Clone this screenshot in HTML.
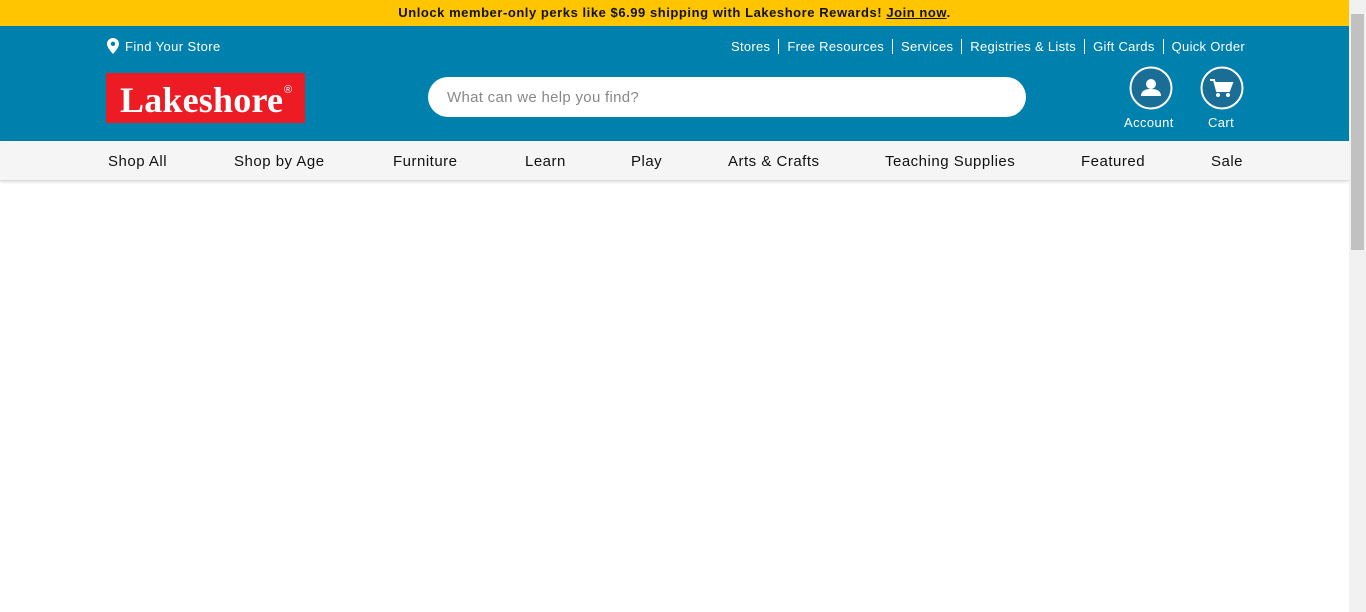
<!DOCTYPE html>
<html><head><style>
*{margin:0;padding:0;box-sizing:border-box}
body{width:1366px;height:612px;overflow:hidden;font-family:"Liberation Sans",sans-serif;background:#fff;position:relative}
.promo{position:absolute;left:0;top:0;width:1349px;height:26px;background:#ffc600;text-align:center;font-size:13px;font-weight:bold;line-height:26px;color:#111;letter-spacing:0.55px}
.hdr{position:absolute;left:0;top:26px;width:1349px;height:115px;background:#0080ad;color:#fff}
.t{position:absolute;font-size:13px;color:#fff;white-space:nowrap;letter-spacing:0.4px}
.links{position:absolute;right:104px;top:13px;font-size:13px;letter-spacing:0.3px;color:#fff}
.links span{padding:0 8px;border-left:1px solid #fff}
.links span:first-child{border:none}
.links span:last-child{padding-right:0}
.logo{position:absolute;left:106px;top:47px;width:199px;height:50px;background:#ed1c24}
.logo b{position:absolute;left:14px;top:8px;font-family:"Liberation Serif",serif;font-weight:bold;color:#fff;font-size:36px;line-height:38px;letter-spacing:0.2px}
.logo i{position:absolute;left:178px;top:11px;font-style:normal;color:#fff;font-size:11px;font-family:"Liberation Sans",sans-serif}
.search{position:absolute;left:428px;top:51px;width:598px;height:40px;background:#fff;border-radius:20px;font-size:15px;color:#888;line-height:42px;padding-left:19px;letter-spacing:0.3px}
.nav{position:absolute;left:0;top:141px;width:1349px;height:40px;background:#f5f5f5;border-bottom:1px solid #ddd;box-shadow:0 1px 3px rgba(0,0,0,.15)}
.nav span{position:absolute;top:12px;font-size:15px;color:#111;letter-spacing:0.5px}
.sb{position:absolute;left:1349px;top:0;width:17px;height:612px;background:#f1f1f1}
.thumb{position:absolute;left:1351px;top:14px;width:13px;height:236px;background:#c1c1c1}
</style></head><body>
<div class="promo">Unlock member-only perks like $6.99 shipping with Lakeshore Rewards! <u>Join now</u>.</div>
<div class="hdr">
<svg style="position:absolute;left:107px;top:12px" width="12" height="16" viewBox="0 0 12 16"><path d="M6 0C2.7 0 0 2.6 0 5.8 0 10 6 16 6 16s6-6 6-10.2C12 2.6 9.3 0 6 0z" fill="#fff"/><circle cx="6" cy="5.8" r="2.2" fill="#0080ad"/></svg>
<div class="t" style="left:125px;top:13px">Find Your Store</div>
<div class="links"><span>Stores</span><span>Free Resources</span><span>Services</span><span>Registries &amp; Lists</span><span>Gift Cards</span><span>Quick Order</span></div>
<div class="logo"><b>Lakeshore</b><i>®</i></div>
<div class="search">What can we help you find?</div>
<svg style="position:absolute;left:1129px;top:40px" width="44" height="44" viewBox="0 0 44 44"><circle cx="22" cy="22" r="20.5" fill="#1a6e96" stroke="#fff" stroke-width="2"/><circle cx="22" cy="18" r="5" fill="#fff"/><path d="M12 30c0-5 4-7 10-7s10 2 10 7z" fill="#fff"/></svg>
<div class="t" style="left:1124px;top:89px">Account</div>
<svg style="position:absolute;left:1200px;top:40px" width="44" height="44" viewBox="0 0 44 44"><circle cx="22" cy="22" r="20.5" fill="#1a6e96" stroke="#fff" stroke-width="2"/><path d="M10 14h4l3 11h12l3-8H15" fill="none" stroke="#fff" stroke-width="2"/><path d="M15 17h17l-3 8H17z" fill="#fff"/><circle cx="18" cy="29" r="2" fill="#fff"/><circle cx="28" cy="29" r="2" fill="#fff"/></svg>
<div class="t" style="left:1208px;top:89px">Cart</div>
</div>
<div class="nav">
<span style="left:108px">Shop All</span><span style="left:234px">Shop by Age</span><span style="left:393px">Furniture</span><span style="left:525px">Learn</span><span style="left:631px">Play</span><span style="left:728px">Arts &amp; Crafts</span><span style="left:885px">Teaching Supplies</span><span style="left:1081px">Featured</span><span style="left:1211px">Sale</span>
</div>
<div class="sb"></div><div class="thumb"></div>
</body></html>
